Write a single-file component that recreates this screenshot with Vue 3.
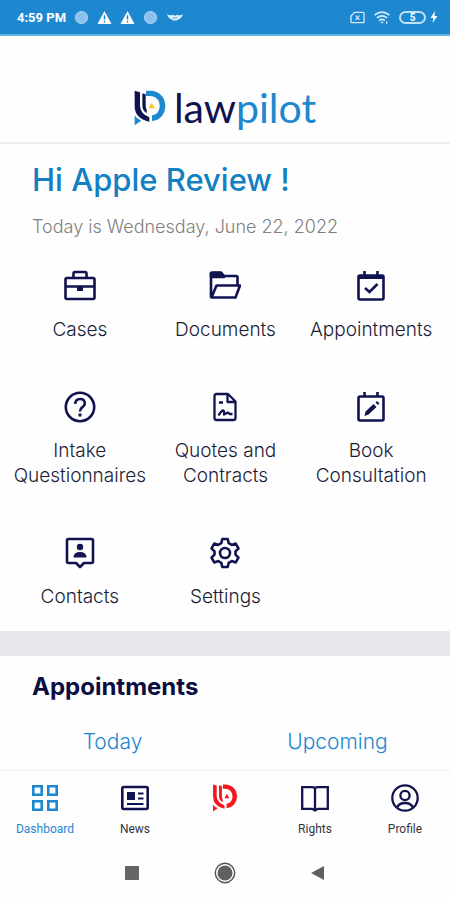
<script setup>
const tiles = [
  { label: 'Cases', icon: 'case' },
  { label: 'Documents', icon: 'folder' },
  { label: 'Appointments', icon: 'calendar' },
  { label: 'Intake Questionnaires', icon: 'question' },
  { label: 'Quotes and Contracts', icon: 'contract' },
  { label: 'Book Consultation', icon: 'book' },
  { label: 'Contacts', icon: 'contact' },
  { label: 'Settings', icon: 'gear' },
]
</script>

<template>
  <div class="app">
    <div class="status">
      <span class="time">4:59 PM</span>
      <svg class="s-icon" viewBox="0 0 16 16"><circle cx="8" cy="8" r="6.5" fill="#8cc3ee" stroke="#b4d9f5" /></svg>
      <svg v-for="n in 2" :key="n" class="s-icon" viewBox="0 0 16 16"><path d="M8 1 15.5 15H.5Z" fill="#fff" /><path d="M8 5.5v4.5M8 11.5v1.8" stroke="#1d87cf" stroke-width="1.6" /></svg>
      <svg class="s-icon" viewBox="0 0 16 16"><circle cx="8" cy="8" r="6.5" fill="#8cc3ee" stroke="#b4d9f5" /></svg>
      <svg class="s-icon wide" viewBox="0 0 18 16"><path d="M.5 4.500Q4 6.500 6.500 5L9 6l2.500-1Q14 6.500 17.500 4.500 16 9 12.500 10 9 12.500 5.500 10 2 9 .5 4.500Z" fill="#d9f1fb" /><path d="M6.500 8.500h5" stroke="#1d87cf" stroke-width=".8" /></svg>
      <span class="grow"></span>
      <svg class="s-icon" viewBox="0 0 16 16" fill="none" stroke="#d5ebfa" stroke-width="1.400"><path d="M5 2.500h9a1 1 0 0 1 1 1v9a1 1 0 0 1-1 1H2a1 1 0 0 1-1-1v-6Z" /><path d="m6 6 4 4.500M10 6l-4 4.500" /></svg>
      <svg class="s-icon wide" viewBox="0 0 18 16" fill="none" stroke="#d5ebfa" stroke-width="1.800"><path d="M1 5.500q8-6.500 16 0M3.500 8.500q5.500-4.500 11 0M6 11.200q3-2.400 6 0" /><path d="m7 12.500 2 2 2-2Z" fill="#d5ebfa" stroke="none" /><path d="M14 12v3" stroke-width="1.200" /></svg>
      <span class="battery">5</span>
      <svg class="bolt" viewBox="0 0 8 14"><path d="M5 1 .5 8H3.500L2.500 13 7.500 6H4.500Z" fill="#fff" /></svg>
    </div>

    <header class="brand">
      <svg class="mark" viewBox="0 0 96 108">
        <path d="M2 2 18 7V48Q20 72 46 82V95Q2 86 2 48Z" fill="#10134f" />
        <path d="M25 10 35 13V46Q35 54 38 59V70Q25 62 25 46Z" fill="#10134f" />
        <path d="M36 2H48C76 2 94 22 94 47 94 73 77 91 54 93V76C69 74 77 62 77 47 77 30 65 18 48 18H36Z" fill="#1d87cf" />
        <path d="M2 76Q8 87 22 92L2 106Z" fill="#1d87cf" />
        <path d="M53 38 63 55H44Z" fill="#fbc51b" />
      </svg>
      <span class="wordmark">law<b>pilot</b></span>
    </header>

    <main>
      <section class="hello">
        <h1>Hi Apple Review !</h1>
        <p>Today is Wednesday, June 22, 2022</p>
      </section>

      <div class="tiles">
        <button v-for="t in tiles" :key="t.label" class="tile" type="button">
          <svg viewBox="0 0 32 32" fill="none" stroke="currentColor" stroke-width="2.600" stroke-linejoin="round">
            <g v-if="t.icon === 'case'"><rect x="1.500" y="8" width="29" height="21" rx="1.500" /><path d="M9.500 8V3.500q0-1.500 1.500-1.500h10q1.500 0 1.500 1.500V8M2 16.500h28" /><path d="M13 17h6v4h-6Z" fill="currentColor" stroke="none" /></g>
            <g v-else-if="t.icon === 'folder'"><path d="M2 27.500V4q0-1.500 1.500-1.500H12L15 6h12q1.500 0 1.500 1.500V15M2.500 27.500 7.500 15.500H31L26.500 27.500Z" /><path d="M2 3h10l3 4H2Z" fill="currentColor" /></g>
            <g v-else-if="t.icon === 'calendar' || t.icon === 'book'">
              <rect x="3.500" y="5.500" width="25" height="24" rx="1.500" /><path d="M9.500 1v5M22.500 1v5" />
              <template v-if="t.icon === 'calendar'"><path d="M3.500 5h25v4h-25Z" fill="currentColor" stroke="none" /><path d="m10 18 4.500 4 8-8" stroke-linejoin="miter" /></template>
              <template v-else><path d="m9.500 25 1-4.500 8-7.500 3 3-8 7.500ZM20.500 11.500l1.500-1.500 2.500 2.500-1.500 1.500Z" fill="currentColor" stroke="none" /></template>
            </g>
            <g v-else-if="t.icon === 'question'"><circle cx="16" cy="16" r="14.200" /><path d="M11.200 12.800Q11.500 8 16 8q4.800 0 4.800 4.500 0 2-2.400 3.700Q16 17.800 16 20.500" /><path d="M14.500 22.500h3v3h-3Z" fill="currentColor" stroke="none" /></g>
            <g v-else-if="t.icon === 'contract'" stroke-width="2.300"><path d="M7.500 3H19l7.500 7.500V27q0 2-2 2h-17q-2 0-2-2V5q0-2 2-2ZM18.500 3v8h8" /><path d="M10 11.500h4M9.500 24.500q3-5 4.500-5 1.500 0 1 4l4-2 1.500 1.500h3" /></g>
            <g v-else-if="t.icon === 'contact'"><path d="M4.500 2h23q1.500 0 1.500 1.500v21q0 1.500-1.500 1.500H20l-4 4-4-4H4.500Q3 26 3 24.500v-21Q3 2 4.500 2Z" /><path d="M9.500 20.500q0-5.500 6.500-5.500t6.500 5.500Z" fill="currentColor" stroke="none" /><circle cx="16" cy="10" r="3.200" fill="currentColor" stroke="none" /></g>
            <g v-else><circle cx="16" cy="16" r="5" /><path d="M13.300 2h5.400l1 4.200 3 1.700 4-1.300 2.800 4.800-3 3v3.200l3 3-2.800 4.800-4-1.300-3 1.700-1 4.200h-5.400l-1-4.200-3-1.700-4 1.300-2.800-4.800 3-3v-3.200l-3-3 2.800-4.800 4 1.300 3-1.700Z" /></g>
          </svg>
          <span>{{ t.label }}</span>
        </button>
      </div>

      <section class="appointments">
        <h2>Appointments</h2>
        <div class="tabs">
          <button type="button">Today</button>
          <button type="button">Upcoming</button>
        </div>
      </section>
    </main>

    <nav class="bottom">
      <a href="#dashboard" class="active">
        <svg viewBox="0 0 28 28" fill="none" stroke="currentColor" stroke-width="2.600"><path d="M2.300 2.300h8.400v8.400H2.300ZM17.300 2.300h8.400v8.400h-8.400ZM2.300 17.300h8.400v8.400H2.300ZM17.300 17.300h8.400v8.400h-8.400Z" /></svg>
        <span>Dashboard</span>
      </a>
      <a href="#news">
        <svg viewBox="0 0 28 28" fill="none" stroke="currentColor" stroke-width="2.600"><rect x="1.300" y="3" width="25.400" height="22" rx="1.500" /><path d="M6 8h8v8H6Z" fill="currentColor" stroke="none" /><path d="M17 9.500h5.500M17 14.500h5.500M6 20h16.500" stroke-width="2.200" /></svg>
        <span>News</span>
      </a>
      <a href="#home" aria-label="Home">
        <svg viewBox="0 0 96 108" fill="#f5151d">
          <path d="M2 2 16 6V48Q18 72 46 82V95Q2 86 2 48Z" />
          <path d="M25 5 36 8V46Q36 54 39 59V70Q25 62 25 46Z" />
          <path d="M40 2H48C76 2 94 22 94 47 94 73 77 91 54 93V76C69 74 77 62 77 47 77 30 65 18 48 18H40Z" />
          <path d="M2 80Q8 89 20 93L2 106ZM55 38 65 55H46Z" />
        </svg>
      </a>
      <a href="#rights">
        <svg viewBox="0 0 28 28" fill="none" stroke="currentColor" stroke-width="2.300"><path d="M1.200 3.200h10q2.800 0 2.800 1.500 0-1.500 2.800-1.500h10v21.600h-10L14 26.500l-2.800-1.700h-10ZM14 4v22" /></svg>
        <span>Rights</span>
      </a>
      <a href="#profile">
        <svg viewBox="0 0 28 28" fill="none" stroke="currentColor" stroke-width="2.300"><circle cx="14" cy="14" r="12.700" /><circle cx="14" cy="11.500" r="4.600" /><path d="M6 23.500q2-4.500 8-4.500t8 4.500" /></svg>
        <span>Profile</span>
      </a>
    </nav>

    <div class="system">
      <button type="button" aria-label="Recent apps"><svg viewBox="0 0 22 22"><path d="M4 4h14v14H4Z" fill="#666" /></svg></button>
      <button type="button" aria-label="Home screen"><svg viewBox="0 0 22 22"><circle cx="11" cy="11" r="9.700" fill="none" stroke="#555" stroke-width="1.400" /><circle cx="11" cy="11" r="7.500" fill="#606060" /></svg></button>
      <button type="button" aria-label="Back"><svg viewBox="0 0 22 22"><path d="M4 11 17 4v14Z" fill="#606060" /></svg></button>
    </div>
  </div>
</template>

<style>
body { margin: 0; background: #fff; }
</style>

<style scoped>
.app {
  min-height: 100vh;
  display: flex;
  flex-direction: column;
  background: #fefefe;
  color: #10134f;
  font-family: Inter, "Liberation Sans", sans-serif;
}
button { border: 0; padding: 0; background: none; color: inherit; font: inherit; cursor: pointer; }
a { color: inherit; text-decoration: none; }
svg { display: block; flex: none; }

.status {
  box-sizing: border-box;
  height: 36px;
  padding: 0 12px 0 17px;
  display: flex;
  align-items: center;
  gap: 8px;
  background: #1d87cf;
  border-bottom: 2px solid #69b3e3;
}
.time { color: #fff; font: 700 13px Roboto, sans-serif; }
.s-icon { width: 15px; height: 15px; }
.s-icon.wide { width: 18px; }
.grow { flex: 1; }
.battery {
  box-sizing: border-box;
  width: 27px;
  height: 13px;
  border: 2px solid #c0e0f6;
  border-radius: 7px;
  color: #fff;
  font: 700 10px/9px Roboto, sans-serif;
  text-align: center;
}
.bolt { width: 8px; height: 14px; margin-left: -4px; }

.brand {
  box-sizing: border-box;
  height: 108px;
  padding-top: 38px;
  display: flex;
  align-items: center;
  justify-content: center;
  gap: 8px;
  border-bottom: 2px solid #eee;
}
.mark { width: 32px; height: 36px; }
.wordmark { font: 400 41px/44px Lato, sans-serif; }
.wordmark b { font-weight: 400; color: #1d87cf; }

.hello { padding: 16px 32px 0; }
h1 { margin: 0; color: #1380c4; font-size: 31px; line-height: 40px; font-weight: 500; }
p { margin: 14px 0 0; color: #808080; font-size: 18px; line-height: 26px; font-weight: 300; }

.tiles {
  display: grid;
  grid-template-columns: repeat(3, 1fr);
  gap: 49px 0;
  padding: 30px 6px 22px 7px;
}
.tile { display: flex; flex-direction: column; align-items: center; gap: 15px; }
.tile svg { width: 32px; height: 32px; }
.tile span { font-size: 19px; line-height: 25px; font-weight: 300; color: #1a1c38; text-align: center; }

.appointments { border-top: 25px solid #e6e7eb; padding-top: 15px; }
h2 { margin: 0 32px; font-size: 24px; line-height: 32px; font-weight: 700; color: #0c0e42; }
.tabs { display: grid; grid-template-columns: 1fr 1fr; margin-top: 24px; }
.tabs button { color: #1d87cf; font-size: 21px; line-height: 30px; font-weight: 300; }

.bottom {
  margin-top: auto;
  display: grid;
  grid-template-columns: repeat(5, 1fr);
  padding: 13px 0 9px;
  border-top: 1px solid #f3f3f3;
}
.bottom a {
  display: flex;
  flex-direction: column;
  align-items: center;
  gap: 9px;
  font: 400 12px/16px Roboto, sans-serif;
}
.bottom svg { width: 28px; height: 28px; }
.bottom span { color: #34353f; }
.bottom .active, .bottom .active span { color: #1d87cf; }
.system {
  display: grid;
  grid-template-columns: repeat(3, 93px);
  justify-content: center;
  padding: 16px 0;
}
.system button { display: flex; justify-content: center; }
.system svg { width: 22px; height: 22px; }
</style>
